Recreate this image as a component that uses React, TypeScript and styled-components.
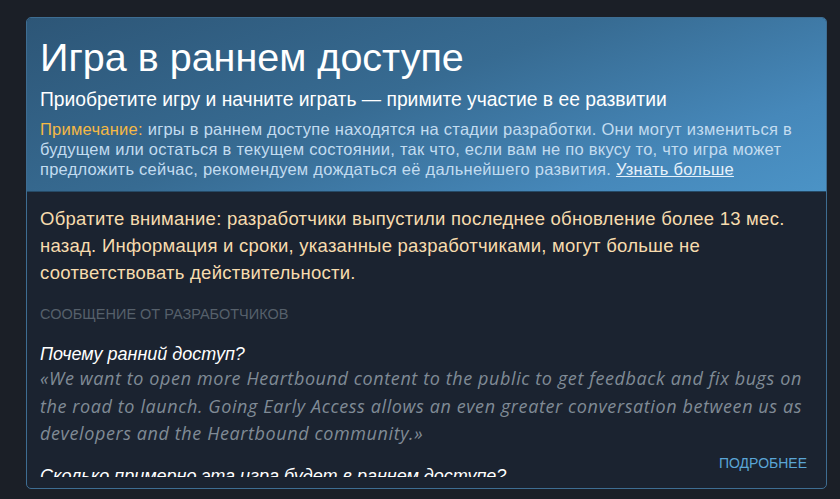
import React from "react";
import styled, { createGlobalStyle } from "styled-components";

const Global = createGlobalStyle`
  html, body { margin: 0; padding: 0; background: #1b1f27; }
  body { width: 840px; height: 499px; overflow: hidden; font-family: "Liberation Sans", Arial, sans-serif; }
`;

const Page = styled.div`
  padding: 17px 13px 0 26px;
  height: 499px;
  box-sizing: border-box;
`;

const Card = styled.section`
  position: relative;
  width: 801px;
  height: 472px;
  box-sizing: border-box;
  border: 1px solid #3e6d92;
  border-radius: 5px;
  background: #1b2330;
  overflow: hidden;
  display: flex;
  flex-direction: column;
`;

const Header = styled.header`
  flex: none;
  background: linear-gradient(160deg, #2d5677 0%, #376b92 45%, #4688ba 80%, #4b93c6 100%);
  padding: 16px 13px 12px 13px;
  border-bottom: 1px solid #264a66;
`;

const Title = styled.h1`
  margin: 0;
  font-family: "Liberation Sans", Arial, sans-serif;
  font-weight: 400;
  font-size: 39.5px;
  line-height: 46px;
  color: #ffffff;
`;

const Subtitle = styled.div`
  margin-top: 8px;
  font-size: 19.3px;
  line-height: 24px;
  color: #ffffff;
`;

const Note = styled.p`
  margin: 7px 0 0;
  font-size: 16.5px;
  letter-spacing: 0.25px;
  line-height: 20px;
  color: #c3dcf0;
`;

const NoteLabel = styled.span`
  color: #f5b945;
`;

const LearnMore = styled.a`
  color: #e6f1fa;
  text-decoration: underline;
`;

const Body = styled.div`
  flex: 0 0 285px;
  overflow: hidden;
  padding: 13px 13px 0;
  box-sizing: border-box;
`;

const Warning = styled.p`
  margin: 0;
  font-size: 18.5px;
  letter-spacing: 0.25px;
  line-height: 27px;
  color: #f7dcae;
`;

const SectionLabel = styled.div`
  margin-top: 20px;
  font-size: 14.5px;
  line-height: 16px;
  color: #56606b;
  text-transform: uppercase;
`;

const Question = styled.div<{ $first?: boolean }>`
  margin-top: ${(p) => (p.$first ? "21px" : "17px")};
  font-style: italic;
  font-size: 18px;
  line-height: 22px;
  color: #ffffff;
`;

const Answer = styled.p`
  margin: 0;
  font-family: "Open Sans", "Noto Sans", sans-serif;
  font-style: italic;
  font-size: 18px;
  letter-spacing: 0.6px;
  line-height: 27.5px;
  color: #808b96;
`;

const MoreButton = styled.button`
  position: absolute;
  right: 19px;
  bottom: 17px;
  padding: 0;
  border: none;
  background: transparent;
  font-family: "Liberation Sans", Arial, sans-serif;
  font-size: 14px;
  line-height: 16px;
  color: #5aa5d6;
  text-transform: uppercase;
  cursor: pointer;
`;

export default function App() {
  return (
    <>
      <Global />
      <Page>
        <Card>
          <Header>
            <Title>Игра в раннем доступе</Title>
            <Subtitle>Приобретите игру и начните играть — примите участие в ее развитии</Subtitle>
            <Note>
              <NoteLabel>Примечание:</NoteLabel> игры в раннем доступе находятся на стадии разработки. Они могут измениться в будущем или остаться в текущем состоянии, так что, если вам не по вкусу то, что игра может предложить сейчас, рекомендуем дождаться её дальнейшего развития.{" "}
              <LearnMore href="#">Узнать больше</LearnMore>
            </Note>
          </Header>
          <Body>
            <Warning>
              Обратите внимание: разработчики выпустили последнее обновление более 13 мес. назад. Информация и сроки, указанные разработчиками, могут больше не соответствовать действительности.
            </Warning>
            <SectionLabel>Сообщение от разработчиков</SectionLabel>
            <Question $first>Почему ранний доступ?</Question>
            <Answer>
              «We want to open more Heartbound content to the public to get feedback and fix bugs on the road to launch. Going Early Access allows an even greater conversation between us as developers and the Heartbound community.»
            </Answer>
            <Question>Сколько примерно эта игра будет в раннем доступе?</Question>
          </Body>
          <MoreButton>Подробнее</MoreButton>
        </Card>
      </Page>
    </>
  );
}
